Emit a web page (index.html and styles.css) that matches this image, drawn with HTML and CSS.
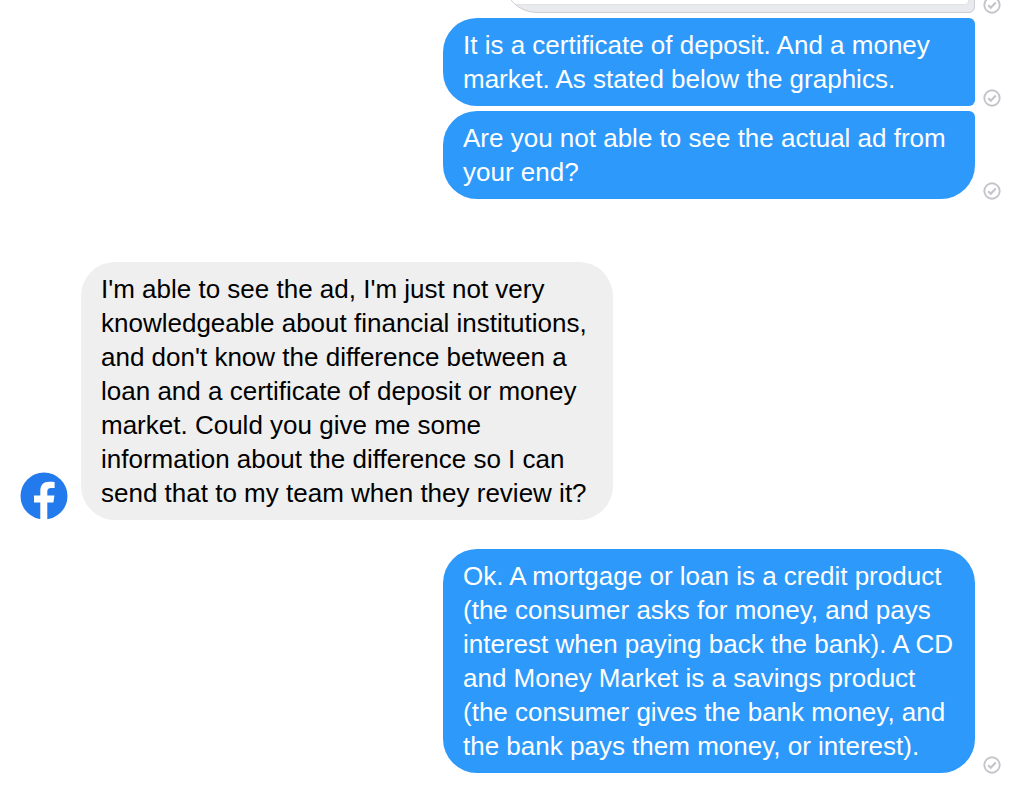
FILE: index.html
```
<!DOCTYPE html>
<html lang="en">
<head>
  <meta charset="utf-8">
  <title>Chat</title>
  <link rel="stylesheet" href="styles.css">
</head>
<body>
  <svg class="defs" width="0" height="0">
    <symbol id="check" viewBox="0 0 18 18">
      <circle cx="9" cy="9" r="7.7" fill="none" stroke="#c3c5ca" stroke-width="1.9"/>
      <path d="M5.200 9.200l2.600 2.500 5-5.200" fill="none" stroke="#c3c5ca" stroke-width="2.200"/>
    </symbol>
  </svg>

  <main class="thread">
    <div class="message sent">
      <div class="attachment">
        <div class="attachment-image"></div>
      </div>
      <svg class="status" aria-label="Sent"><use href="#check"/></svg>
    </div>
    <div class="message sent">
      <div class="bubble first">It is a certificate of deposit. And a money market. As stated below the graphics.</div>
      <svg class="status" aria-label="Sent"><use href="#check"/></svg>
    </div>
    <div class="message sent">
      <div class="bubble last">Are you not able to see the actual ad from your end?</div>
      <svg class="status" aria-label="Sent"><use href="#check"/></svg>
    </div>

    <div class="message received">
      <svg class="avatar" viewBox="0 0 48 48" aria-label="Facebook">
        <circle cx="24" cy="24" r="23.5" fill="#237aec"/>
        <path d="M20.300 48V30.600H14v-7h6.300v-4.800C20.300 12.800 23.600 9.700 29 9.700c2.100 0 3.900.1 5.600.4v6h-3.400c-3 0-3.900 1.500-3.900 3.500v4h7.100l-1 7h-6.100V48z" fill="#fff"/>
      </svg>
      <div class="bubble">I'm able to see the ad, I'm just not very knowledgeable about financial institutions, and don't know the difference between a loan and a certificate of deposit or money market. Could you give me some information about the difference so I can send that to my team when they review it?</div>
    </div>

    <div class="message sent">
      <div class="bubble">Ok. A mortgage or loan is a credit product (the consumer asks for money, and pays interest when paying back the bank). A CD and Money Market is a savings product (the consumer gives the bank money, and the bank pays them money, or interest).</div>
      <svg class="status" aria-label="Sent"><use href="#check"/></svg>
    </div>
  </main>
</body>
</html>
```
FILE: styles.css
```
body {
  margin: 0;
  background-color: #fff;
  font-family: "Helvetica Neue", "Liberation Sans", Arial, sans-serif;
  font-size: 26px;
  line-height: 34px;
}

.defs {
  position: absolute;
}

/* the thread is scrolled, the attachment is cut by the top edge */
.thread {
  display: flex;
  flex-direction: column;
  gap: 5px;
  margin-top: -67px;
  padding: 0 23px 24px 20px;
}

.message {
  display: flex;
  align-items: flex-end;
}

.sent {
  justify-content: flex-end;
  gap: 8px;
}

.received {
  gap: 13px;
  margin: 58px 0 24px;
}

.bubble {
  box-sizing: border-box;
  max-width: 532px;
  padding: 10px 20px;
  border-radius: 34px;
}

.sent .bubble {
  background-color: #2d99fa;
  color: #fff;
}

.received .bubble {
  background-color: #efefef;
  color: #000;
}

.sent .first {
  border-radius: 34px 6px 6px 34px;
}

.sent .last {
  border-radius: 34px 6px 34px 34px;
}

.attachment {
  box-sizing: border-box;
  width: 472px;
  height: 80px;
  padding: 0 5px 7px 0;
  border: 1px solid #cdced3;
  border-radius: 34px 6px 6px 34px;
  background-color: #e9eaee;
  overflow: hidden;
}

.attachment-image {
  box-sizing: border-box;
  height: 100%;
  border: 1px solid #e1e2e5;
  border-radius: 0 0 4px 0;
  background-color: #fff;
}

.status {
  flex: none;
  width: 18px;
  height: 18px;
  margin-bottom: -1px;
}

.avatar {
  flex: none;
  width: 48px;
  height: 48px;
}
```
